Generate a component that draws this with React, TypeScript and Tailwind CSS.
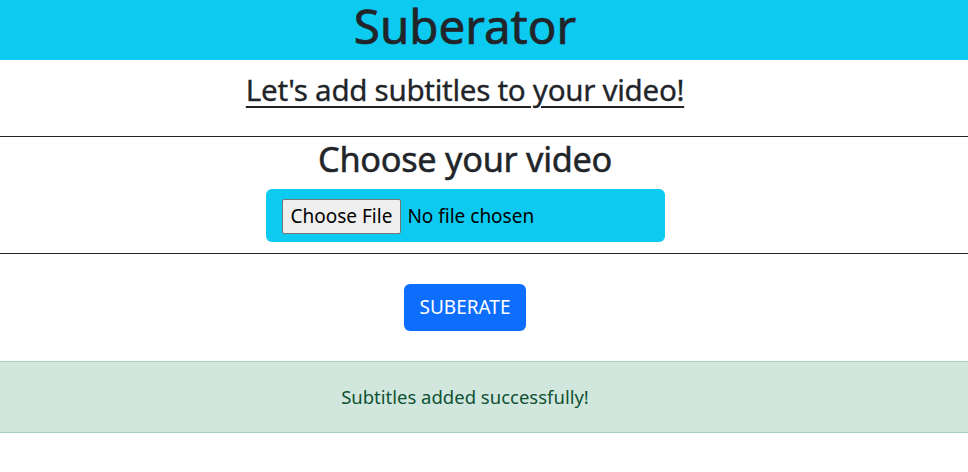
import React from "react";

export default function App() {
  return (
    <div className="w-[968px] min-h-[472px] bg-white text-[#212529]" style={{ fontFamily: '"Noto Sans", "Open Sans", sans-serif' }}>
      <div className="h-[60px] bg-[#0dcaf0] flex justify-center pr-[38px]">
        <h1 className="text-[47.5px] font-normal leading-[51px] [-webkit-text-stroke:0.7px_#212529]">Suberator</h1>
      </div>
      <div className="h-[76px] flex justify-center pr-[38px] pt-[10px]">
        <h2 className="text-[29.6px] font-normal underline underline-offset-[5px] decoration-[2px] leading-[40px] tracking-[-0.3px] [-webkit-text-stroke:0.3px_#212529]">
          Let's add subtitles to your video!
        </h2>
      </div>
      <div className="h-px bg-[#212529]" />
      <div className="h-[116px] flex flex-col items-center pr-[38px]">
        <h2 className="text-[34.3px] font-normal leading-[42px] mt-[1px] tracking-[-0.3px] [-webkit-text-stroke:0.5px_#212529]">Choose your video</h2>
        <div className="mt-[9px] w-[399px] h-[53px] bg-[#0dcaf0] rounded-[6px] flex items-center pl-[16px] pt-[2px]">
          <span className="h-[35px] px-[8px] border border-[#767676] bg-[#efefef] rounded-[2px] text-[19px] text-black flex items-center">
            Choose File
          </span>
          <span className="ml-[6px] text-[19px] text-black">No file chosen</span>
        </div>
      </div>
      <div className="h-px bg-[#212529]" />
      <div className="h-[107px] flex justify-center items-start pr-[38px] pt-[30px]">
        <button className="w-[122px] h-[47px] bg-[#0d6efd] text-white rounded-[6px] text-[19px]">SUBERATE</button>
      </div>
      <div className="h-[72px] bg-[#d1e7dd] border-y border-[#a3cfbb] text-[#0f5132] flex items-center justify-center pr-[38px] text-[18.5px]">
        Subtitles added successfully!
      </div>
    </div>
  );
}
